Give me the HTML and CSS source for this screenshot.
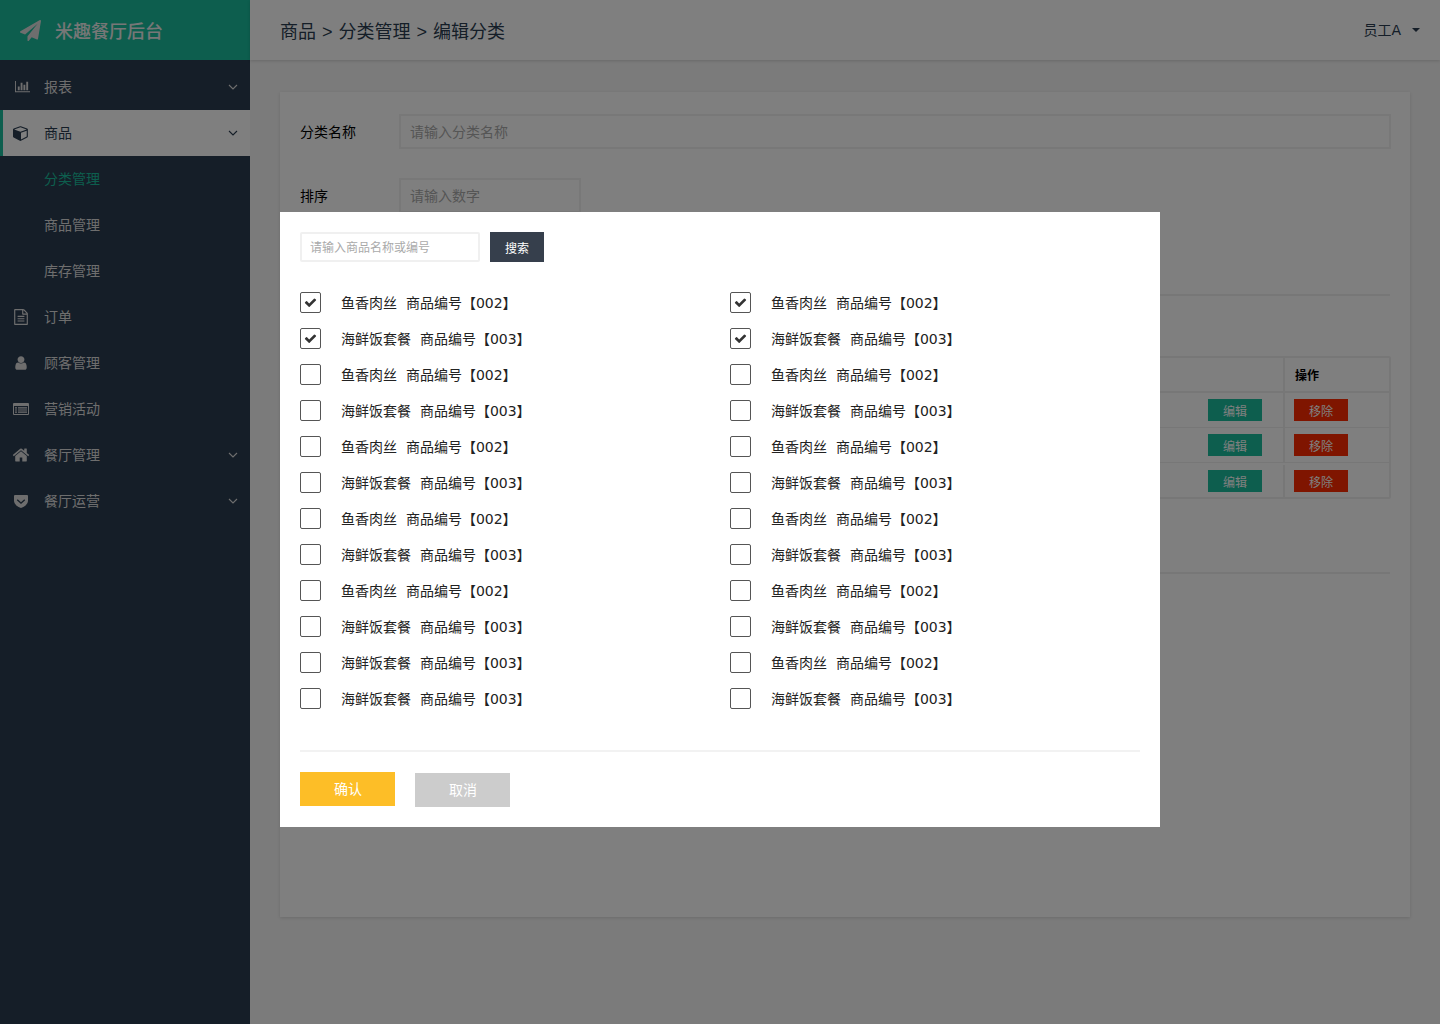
FILE: index.html
```html
<!DOCTYPE html>
<html lang="zh-CN">
<head>
<meta charset="utf-8">
<title>米趣餐厅后台</title>
<link rel="stylesheet" href="styles.css">
</head>
<body>
<svg width="0" height="0" class="defs">
  <symbol id="chev" viewBox="0 0 10 6"><polyline points="1,1 5,5 9,1" fill="none" stroke="currentColor" stroke-width="1.1"/></symbol>
  <symbol id="tick" viewBox="0 0 1792 1792"><path fill="currentColor" d="M1671 566q0 40-28 68l-724 724-136 136q-28 28-68 28t-68-28l-136-136-362-362q-28-28-28-68t28-68l136-136q28-28 68-28t68 28l294 295 656-657q28-28 68-28t68 28l136 136q28 28 28 68z"/></symbol>
</svg>
<div class="app">
  <aside class="sidebar">
    <div class="brand">
      <svg class="brand-icon" viewBox="0 0 1792 1792"><path fill="currentColor" d="M1764 11q33 24 27 64l-256 1536q-5 29-32 45-14 8-31 8-11 0-24-5l-453-185-242 295q-18 23-49 23-13 0-22-4-19-7-30.5-23.5t-11.5-36.5v-349l864-1059-1069 925-395-162q-37-14-40-55-2-40 32-59l1664-960q15-9 32-9 20 0 36 11z"/></svg>
      <span class="brand-name">米趣餐厅后台</span>
    </div>
    <nav class="nav">
      <a class="nav-item">
        <svg class="nav-icon" viewBox="-410 -269 2458 2458"><path fill="currentColor" d="M640 896v512h-256v-512h256zm384-512v1024h-256v-1024h256zm1024 1152v128h-2048v-1536h128v1408h1920zm-640-896v768h-256v-768h256zm384-384v1152h-256v-1152h256z"/></svg>
        <span class="nav-text">报表</span>
        <svg class="chev"><use href="#chev"/></svg>
      </a>
      <a class="nav-item active">
        <svg class="nav-icon" viewBox="-112 -112 2016 2016"><path fill="currentColor" d="M896 1629l640-349v-636l-640 233v752zm-64-865l698-254-698-254-698 254zm832-252v768q0 35-18 65t-49 47l-704 384q-28 16-61 16t-61-16l-704-384q-31-17-49-47t-18-65v-768q0-40 23-73t61-47l704-256q24-9 48-9t48 9l704 256q38 14 61 47t23 73z"/></svg>
        <span class="nav-text">商品</span>
        <svg class="chev"><use href="#chev"/></svg>
      </a>
      <a class="nav-sub current">分类管理</a>
      <a class="nav-sub">商品管理</a>
      <a class="nav-sub">库存管理</a>
      <a class="nav-item">
        <svg class="nav-icon" viewBox="-112 -112 2016 2016"><path fill="currentColor" d="M1596 380q28 28 48 76t20 88v1152q0 40-28 68t-68 28h-1344q-40 0-68-28t-28-68v-1600q0-40 28-68t68-28h896q40 0 88 20t76 48zm-444-244v376h376q-10-29-22-41l-313-313q-12-12-41-22zm384 1528v-1024h-416q-40 0-68-28t-28-68v-416h-768v1536h1280zm-1024-864q0-14 9-23t23-9h704q14 0 23 9t9 23v64q0 14-9 23t-23 9h-704q-14 0-23-9t-9-23v-64zm736 224q14 0 23 9t9 23v64q0 14-9 23t-23 9h-704q-14 0-23-9t-9-23v-64q0-14 9-23t23-9h704zm0 256q14 0 23 9t9 23v64q0 14-9 23t-23 9h-704q-14 0-23-9t-9-23v-64q0-14 9-23t23-9h704z"/></svg>
        <span class="nav-text">订单</span>
      </a>
      <a class="nav-item">
        <svg class="nav-icon" viewBox="-112 -112 2016 2016"><path fill="currentColor" d="M1536 1399q0 109-62.5 187t-150.5 78h-854q-88 0-150.5-78t-62.5-187q0-85 8.5-160.5t31.5-152 58.5-131 94-89 134.5-34.5q131 128 313 128t313-128q76 0 134.5 34.5t94 89 58.5 131 31.5 152 8.5 160.5zm-256-887q0 159-112.5 271.5t-271.5 112.5-271.5-112.5-112.5-271.5 112.5-271.5 271.5-112.5 271.5 112.5 112.5 271.5z"/></svg>
        <span class="nav-text">顾客管理</span>
      </a>
      <a class="nav-item">
        <svg class="nav-icon" viewBox="-1 -3 18 18"><path fill="currentColor" fill-rule="evenodd" d="M1 0h14a1 1 0 0 1 1 1v10a1 1 0 0 1-1 1H1a1 1 0 0 1-1-1V1a1 1 0 0 1 1-1zm0 3v8h14V3zm1 1.200h2v1.200H2zm3 0h9v1.200H5zM2 6.400h2v1.200H2zm3 0h9v1.200H5zM2 8.600h2v1.200H2zm3 0h9v1.200H5z"/></svg>
        <span class="nav-text">营销活动</span>
      </a>
      <a class="nav-item">
        <svg class="nav-icon" viewBox="0 0 1792 1792"><path fill="currentColor" d="M1472 992v480q0 26-19 45t-45 19h-384v-384h-256v384h-384q-26 0-45-19t-19-45v-480q0-1 .5-3t.5-3l575-474 575 474q1 2 1 6zm223-69l-62 74q-8 9-21 11h-3q-13 0-21-7l-692-577-692 577q-12 8-24 7-13-2-21-11l-62-74q-8-10-7-23.5t11-21.5l719-599q32-26 76-26t76 26l244 204v-195q0-14 9-23t23-9h192q14 0 23 9t9 23v408l219 182q10 8 11 21.500t-7 23.500z"/></svg>
        <span class="nav-text">餐厅管理</span>
        <svg class="chev"><use href="#chev"/></svg>
      </a>
      <a class="nav-item">
        <svg class="nav-icon" viewBox="-2 -2 18 18"><path fill="currentColor" fill-rule="evenodd" d="M1 1h12a1 1 0 0 1 1 1v4.500C14 10.500 10 13 7 14 4 13 0 10.500 0 6.500V2a1 1 0 0 1 1-1zm2.700 4.300L2.800 6.200 7 10l4.200-3.800-.9-.9L7 8.200z"/></svg>
        <span class="nav-text">餐厅运营</span>
        <svg class="chev"><use href="#chev"/></svg>
      </a>
    </nav>
  </aside>
  <div class="main">
    <header class="topbar">
      <div class="crumbs">商品 &gt; 分类管理 &gt; 编辑分类</div>
      <div class="user"><span class="user-name">员工A</span><svg class="caret" viewBox="0 0 8 4"><polygon points="0,0 8,0 4,4" fill="currentColor"/></svg></div>
    </header>
    <section class="card">
      <div class="field">
        <label class="field-label">分类名称</label>
        <input class="field-input" placeholder="请输入分类名称">
      </div>
      <div class="field field-sort">
        <label class="field-label">排序</label>
        <input class="field-input narrow" placeholder="请输入数字">
      </div>
      <hr class="rule rule-a">
      <div class="table">
        <div class="row head"><div class="cell grow"></div><div class="cell op">操作</div></div>
        <div class="row"><div class="cell grow"><span class="tag edit">编辑</span></div><div class="cell op"><span class="tag del">移除</span></div></div>
        <div class="row"><div class="cell grow"><span class="tag edit">编辑</span></div><div class="cell op"><span class="tag del">移除</span></div></div>
        <div class="row"><div class="cell grow"><span class="tag edit">编辑</span></div><div class="cell op"><span class="tag del">移除</span></div></div>
      </div>
      <hr class="rule rule-b">
    </section>
  </div>
</div>
<div class="overlay">
  <div class="modal">
    <div class="search">
      <input class="search-input" placeholder="请输入商品名称或编号">
      <button class="search-btn">搜索</button>
    </div>
    <div class="choices">
      <label class="choice"><span class="box"><svg class="tick"><use href="#tick"/></svg></span>鱼香肉丝&nbsp;&nbsp;商品编号【002】</label>
      <label class="choice"><span class="box"><svg class="tick"><use href="#tick"/></svg></span>鱼香肉丝&nbsp;&nbsp;商品编号【002】</label>
      <label class="choice"><span class="box"><svg class="tick"><use href="#tick"/></svg></span>海鲜饭套餐&nbsp;&nbsp;商品编号【003】</label>
      <label class="choice"><span class="box"><svg class="tick"><use href="#tick"/></svg></span>海鲜饭套餐&nbsp;&nbsp;商品编号【003】</label>
      <label class="choice"><span class="box"></span>鱼香肉丝&nbsp;&nbsp;商品编号【002】</label>
      <label class="choice"><span class="box"></span>鱼香肉丝&nbsp;&nbsp;商品编号【002】</label>
      <label class="choice"><span class="box"></span>海鲜饭套餐&nbsp;&nbsp;商品编号【003】</label>
      <label class="choice"><span class="box"></span>海鲜饭套餐&nbsp;&nbsp;商品编号【003】</label>
      <label class="choice"><span class="box"></span>鱼香肉丝&nbsp;&nbsp;商品编号【002】</label>
      <label class="choice"><span class="box"></span>鱼香肉丝&nbsp;&nbsp;商品编号【002】</label>
      <label class="choice"><span class="box"></span>海鲜饭套餐&nbsp;&nbsp;商品编号【003】</label>
      <label class="choice"><span class="box"></span>海鲜饭套餐&nbsp;&nbsp;商品编号【003】</label>
      <label class="choice"><span class="box"></span>鱼香肉丝&nbsp;&nbsp;商品编号【002】</label>
      <label class="choice"><span class="box"></span>鱼香肉丝&nbsp;&nbsp;商品编号【002】</label>
      <label class="choice"><span class="box"></span>海鲜饭套餐&nbsp;&nbsp;商品编号【003】</label>
      <label class="choice"><span class="box"></span>海鲜饭套餐&nbsp;&nbsp;商品编号【003】</label>
      <label class="choice"><span class="box"></span>鱼香肉丝&nbsp;&nbsp;商品编号【002】</label>
      <label class="choice"><span class="box"></span>鱼香肉丝&nbsp;&nbsp;商品编号【002】</label>
      <label class="choice"><span class="box"></span>海鲜饭套餐&nbsp;&nbsp;商品编号【003】</label>
      <label class="choice"><span class="box"></span>海鲜饭套餐&nbsp;&nbsp;商品编号【003】</label>
      <label class="choice"><span class="box"></span>海鲜饭套餐&nbsp;&nbsp;商品编号【003】</label>
      <label class="choice"><span class="box"></span>鱼香肉丝&nbsp;&nbsp;商品编号【002】</label>
      <label class="choice"><span class="box"></span>海鲜饭套餐&nbsp;&nbsp;商品编号【003】</label>
      <label class="choice"><span class="box"></span>海鲜饭套餐&nbsp;&nbsp;商品编号【003】</label>
    </div>
    <div class="actions">
      <button class="btn confirm">确认</button>
      <button class="btn cancel">取消</button>
    </div>
  </div>
</div>
</body>
</html>
```
FILE: styles.css
```css
* { box-sizing: border-box; }
html, body { margin: 0; height: 100%; }
body {
  height: 1024px;
  overflow: hidden;
  font-family: "DejaVu Sans", "Noto Sans CJK SC", sans-serif;
  font-size: 14px;
  color: #333;
  background: #f6f6f6;
}
.defs { display: block; height: 0; }
.app { display: flex; height: 1024px; }

.sidebar { width: 250px; flex: none; background: #2a3c50; color: #ddd; }
.brand { height: 60px; background: #1abc9c; display: flex; align-items: center; padding-left: 20px; color: #fff; }
.brand-icon { width: 21px; height: 21px; margin-right: 14px; color: #ddd; }
.brand-name { font-size: 18px; font-weight: 500; color: #eee; }
.nav { padding-top: 4px; display: flex; flex-direction: column; }
.nav-item { height: 46px; display: flex; align-items: center; padding-left: 12px; padding-right: 12px; }
.nav-icon { width: 18px; height: 18px; margin-right: 14px; flex: none; }
.nav-text { flex: 1; margin-bottom: 2px; }
.chev { width: 10px; height: 6px; }
.nav-item.active { background: #fff; color: #2a3c50; border-left: 3px solid #1abc9c; padding-left: 9px; }
.nav-sub { height: 46px; display: flex; align-items: center; padding: 0 0 2px 44px; }
.nav-sub.current { color: #1abc9c; }

.main { flex: 1; min-width: 0; }
.topbar {
  height: 60px;
  background: #fff;
  box-shadow: 0 1px 3px rgba(0,0,0,.15);
  display: flex;
  align-items: center;
  justify-content: space-between;
  padding: 0 20px 0 30px;
}
.crumbs { font-size: 18px; color: #2a3c50; font-family: "Liberation Sans", "Noto Sans CJK SC", sans-serif; word-spacing: 1px; }
.user { color: #2a3c50; display: flex; align-items: center; }
.user-name { margin-bottom: 2px; }
.caret { width: 8px; height: 4px; margin-left: 11px; }

.card {
  margin: 32px 30px 0;
  height: 825px;
  background: #fff;
  box-shadow: 0 1px 3px rgba(0,0,0,.12);
  padding: 22px 20px 0;
}
.field { display: flex; align-items: center; height: 35px; margin-right: -1px; }
.field-sort { margin-top: 29px; }
.field-label { width: 99px; flex: none; color: #000; margin-bottom: 2px; }
.field-input {
  flex: 1;
  height: 35px;
  border: 2px solid #f0f0f0;
  padding: 0 9px;
  font: inherit;
  background: #fff;
  outline: none;
}
.field-input.narrow { flex: none; width: 182px; }
.field-input::placeholder { color: #aaa; }
.rule { border: 0; height: 2px; background: #eee; margin: 0; }
.rule-a { margin-top: 81px; }
.table { margin: 60px -1px 0 0; border: 2px solid #eee; border-radius: 2px; }
.row { display: flex; height: 35px; border-top: 1px solid #eee; }
.row.head { height: 35px; border-top: 0; border-bottom: 2px solid #eee; font-size: 12px; font-weight: 700; color: #000; }
.row.head + .row { border-top: 0; height: 34px; }
.row:last-child { padding-top: 2px; }
.row.head .op { padding-left: 10px; }
.cell { display: flex; align-items: center; }
.cell.grow { flex: 1; justify-content: flex-end; padding-right: 21px; }
.cell.op { width: 106px; flex: none; border-left: 2px solid #eee; padding-left: 9px; }
.tag { width: 54px; height: 22px; display: flex; align-items: center; justify-content: center; font-size: 12px; color: #fff; }
.tag.edit { background: #1abc9c; }
.tag.del { background: #fe2a00; }
.rule-b { margin-top: 73px; }

.overlay { position: fixed; inset: 0; background: rgba(0,0,0,.5); }
.modal {
  width: 880px;
  height: 615px;
  margin: 212px auto 0;
  background: #fff;
  padding: 20px;
}
.search { display: flex; gap: 10px; height: 30px; }
.search-input {
  width: 180px;
  height: 30px;
  border: 2px solid #f0f0f0;
  border-radius: 2px;
  padding: 1px 8px 0;
  font: inherit;
  font-size: 12px;
  outline: none;
}
.search-input::placeholder { color: #aaa; }
.search-btn { width: 54px; height: 30px; border: 0; background: #363f4c; color: #fff; font: inherit; font-size: 12px; padding: 0; }
.choices {
  display: grid;
  grid-template-columns: 430px 410px;
  grid-auto-rows: 36px;
  margin-top: 22px;
  height: 468px;
  border-bottom: 2px solid #f2f2f2;
}
.choice { display: flex; align-items: center; color: #222; white-space: pre; height: 36px; }
.box {
  width: 21px;
  height: 21px;
  flex: none;
  margin-right: 20px;
  border: 1px solid #555;
  border-radius: 2px;
  display: flex;
  align-items: center;
  justify-content: center;
  color: #333;
}
.tick { width: 13px; height: 13px; }
.actions { display: flex; gap: 20px; margin-top: 20px; align-items: flex-start; }
.btn { width: 95px; height: 34px; border: 0; color: #fff; font: inherit; padding: 0 0 2px 1px; }
.btn.confirm { background: #fdbe27; }
.btn.cancel { background: #ccc; margin-top: 1px; }
```
